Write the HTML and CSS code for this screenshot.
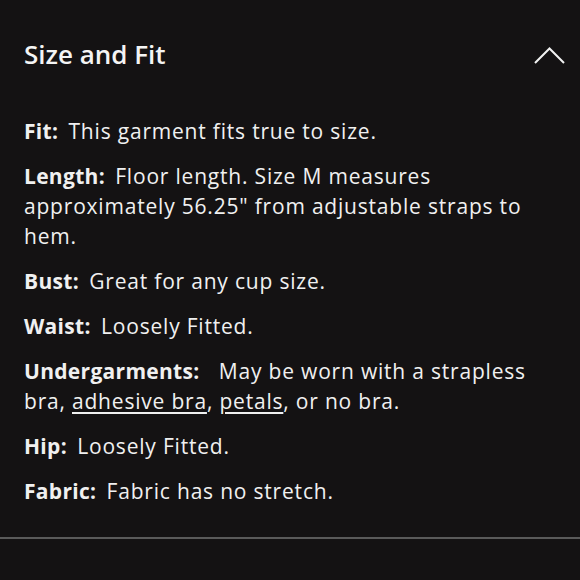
FILE: index.html
```html
<!DOCTYPE html>
<html>
<head>
<meta charset="utf-8">
<link rel="stylesheet" href="styles.css">
</head>
<body>
<section class="panel">
  <div class="header">
    <h2 class="title">Size and Fit</h2>
    <svg class="chevron" width="31" height="17" viewBox="0 0 31 17"><polyline points="1,16 15.5,1.5 30,16" fill="none" stroke="#f2f2f2" stroke-width="2"/></svg>
  </div>
  <div class="details">
    <p class="row"><b class="label">Fit:</b> This garment fits true to size.</p>
    <p class="row"><b class="label">Length:</b> Floor length. Size M measures approximately 56.25" from adjustable straps to hem.</p>
    <p class="row"><b class="label">Bust:</b> Great for any cup size.</p>
    <p class="row"><b class="label">Waist:</b> Loosely Fitted.</p>
    <p class="row"><b class="label wide">Undergarments:</b> May be worn with a strapless bra, <a href="#">adhesive bra</a>, <a href="#">petals</a>, or no bra.</p>
    <p class="row"><b class="label">Hip:</b> Loosely Fitted.</p>
    <p class="row"><b class="label">Fabric:</b> Fabric has no stretch.</p>
  </div>
  <hr class="divider">
</section>
</body>
</html>
```
FILE: styles.css
```css
html, body {
  margin: 0;
  padding: 0;
  background: #141213;
}
body {
  width: 580px;
  height: 580px;
  overflow: hidden;
  font-family: "Open Sans", "Noto Sans", sans-serif;
  color: #f0f0f0;
}
.panel {
  padding-top: 39px;
}
.header {
  display: flex;
  justify-content: space-between;
  align-items: center;
  padding: 0 15px 0 24px;
  height: 30px;
}
.title {
  margin: 0;
  font-size: 26px;
  font-weight: 600;
  line-height: 30px;
  color: #f4f4f4;
}
.chevron {
  display: block;
  margin-top: 2px;
}
.details {
  display: flex;
  flex-direction: column;
  gap: 15px;
  padding: 47px 24px 0 24px;
}
.row {
  margin: 0;
  font-size: 21px;
  line-height: 30px;
  letter-spacing: 0.8px;
}
.label {
  font-weight: 700;
  letter-spacing: 0.3px;
  margin-right: 4px;
}
.label.wide {
  margin-right: 13px;
}
.row a {
  color: inherit;
  text-decoration: underline;
  text-underline-offset: 3px;
}
.divider {
  margin: 31px 0 0 0;
  border: 0;
  height: 2px;
  background: #5a5a5a;
}
```
